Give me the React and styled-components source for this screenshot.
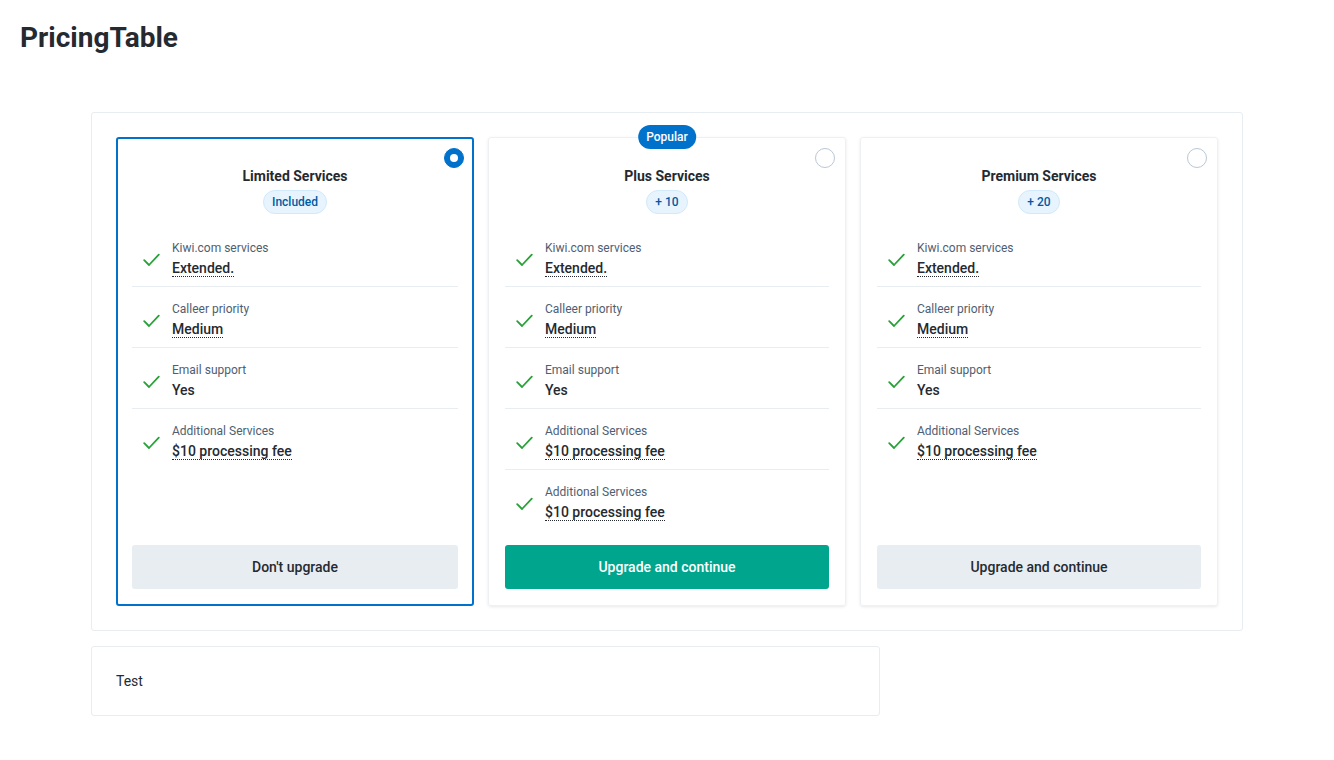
import React, { useState } from 'react';
import styled, { createGlobalStyle } from 'styled-components';

const GlobalStyle = createGlobalStyle`
  body {
    margin: 0;
    background: #ffffff;
    font-family: Roboto, 'Liberation Sans', sans-serif;
    color: #252a31;
  }
  * { box-sizing: border-box; }
`;

const Page = styled.div`
  padding: 22px 20px 20px;
`;

const PageTitle = styled.h1`
  margin: 0;
  font-size: 28px;
  line-height: 32px;
  font-weight: 700;
  color: #252a31;
`;

const Main = styled.div`
  width: 1152px;
  margin: 58px auto 0;
  display: flex;
  flex-direction: column;
  gap: 15px;
`;

const Box = styled.div`
  border: 1px solid #e8edf1;
  border-radius: 3px;
  padding: 24px;
  background: #fff;
  width: ${p => p.$width || 'auto'};
`;

const Grid = styled.div`
  display: grid;
  grid-template-columns: repeat(3, 1fr);
  gap: 14px;
`;

const Card = styled.div`
  position: relative;
  display: flex;
  flex-direction: column;
  padding: ${p => (p.$selected ? '15px 14px' : '16px')};
  border-radius: 3px;
  border: ${p => (p.$selected ? '2px solid #0172cb' : '1px solid #eef1f4')};
  box-shadow: ${p => (p.$selected ? 'none' : '0 1px 3px rgba(37, 42, 49, 0.1)')};
  cursor: pointer;
`;

const PopularBadge = styled.div`
  position: absolute;
  top: -13px;
  left: 50%;
  transform: translateX(-50%);
  background: #0172cb;
  color: #fff;
  font-size: 12px;
  font-weight: 500;
  line-height: 16px;
  padding: 4px 8px;
  border-radius: 12px;
`;

const Radio = styled.span`
  position: absolute;
  top: ${p => (p.$checked ? '9px' : '10px')};
  right: ${p => (p.$checked ? '8px' : '10px')};
  width: 20px;
  height: 20px;
  border-radius: 50%;
  background: ${p => (p.$checked ? '#0172cb' : '#fff')};
  border: 1px solid ${p => (p.$checked ? '#0172cb' : '#bac7d5')};
  display: flex;
  align-items: center;
  justify-content: center;

  &::after {
    content: "";
    display: ${p => (p.$checked ? 'block' : 'none')};
    width: 8px;
    height: 8px;
    border-radius: 50%;
    background: #fff;
  }
`;

const Header = styled.div`
  display: flex;
  flex-direction: column;
  align-items: center;
  padding-top: 12px;
`;

const CardTitle = styled.div`
  font-size: 14px;
  line-height: 20px;
  font-weight: 700;
  color: #252a31;
`;

const Badge = styled.div`
  margin-top: 4px;
  font-size: 12px;
  line-height: 16px;
  font-weight: 500;
  color: #005aa3;
  background: #e8f4fd;
  border: 1px solid #d0e9fb;
  border-radius: 12px;
  padding: 3px 8px;
`;

const List = styled.div`
  margin-top: 12px;
  display: flex;
  flex-direction: column;
`;

const Row = styled.div`
  display: flex;
  align-items: center;
  gap: 12px;
  padding: 14px 0 8px 11px;
  border-bottom: 1px solid #e8edf1;

  &:last-child {
    border-bottom: none;
  }
`;

const CheckIcon = styled.svg`
  flex: none;
  width: 17px;
  height: 14px;
  margin-top: 2px;
`;

const RowText = styled.div`
  display: flex;
  flex-direction: column;
  align-items: flex-start;
  gap: 2px;
`;

const Label = styled.div`
  font-size: 12px;
  line-height: 16px;
  color: #4f5e71;
`;

const Value = styled.span`
  font-size: 14px;
  line-height: 20px;
  font-weight: 500;
  color: #252a31;

  span {
    border-bottom: ${p => (p.$dotted ? '1px dotted #252a31' : 'none')};
  }
`;

const Button = styled.button`
  margin-top: auto;
  height: 44px;
  width: 100%;
  border: none;
  border-radius: 3px;
  font-family: Roboto, 'Liberation Sans', sans-serif;
  font-size: 14px;
  font-weight: 500;
  cursor: pointer;
  background: ${p => (p.$primary ? '#00a58e' : '#e8edf1')};
  color: ${p => (p.$primary ? '#ffffff' : '#252a31')};
`;

const Spacer = styled.div`
  height: 15px;
  flex: none;
`;

const TestText = styled.div`
  font-size: 14px;
  line-height: 20px;
  color: #252a31;
`;

const baseFeatures = [
  { label: 'Kiwi.com services', value: 'Extended.', dotted: true },
  { label: 'Calleer priority', value: 'Medium', dotted: true },
  { label: 'Email support', value: 'Yes', dotted: false },
  { label: 'Additional Services', value: '$10 processing fee', dotted: true },
];

const plans = [
  { id: 'limited', title: 'Limited Services', badge: 'Included', features: baseFeatures, action: "Don't upgrade" },
  {
    id: 'plus',
    title: 'Plus Services',
    badge: '+ 10',
    popular: true,
    features: [...baseFeatures, baseFeatures[3]],
    action: 'Upgrade and continue',
    primary: true,
  },
  { id: 'premium', title: 'Premium Services', badge: '+ 20', features: baseFeatures, action: 'Upgrade and continue' },
];

function Check() {
  return (
    <CheckIcon viewBox="0 0 17 14" fill="none">
      <path d="M1.2 7.2l4.8 4.8L15.8 1.6" stroke="#28a138" strokeWidth="1.8" strokeLinecap="round" strokeLinejoin="round" />
    </CheckIcon>
  );
}

export default function App() {
  const [selected, setSelected] = useState('limited');

  return (
    <Page>
      <GlobalStyle />
      <PageTitle>PricingTable</PageTitle>
      <Main>
        <Box>
          <Grid>
            {plans.map(plan => (
              <Card key={plan.id} $selected={selected === plan.id} onClick={() => setSelected(plan.id)}>
                {plan.popular && <PopularBadge>Popular</PopularBadge>}
                <Radio $checked={selected === plan.id} />
                <Header>
                  <CardTitle>{plan.title}</CardTitle>
                  <Badge>{plan.badge}</Badge>
                </Header>
                <List>
                  {plan.features.map((f, i) => (
                    <Row key={i}>
                      <Check />
                      <RowText>
                        <Label>{f.label}</Label>
                        <Value $dotted={f.dotted}><span>{f.value}</span></Value>
                      </RowText>
                    </Row>
                  ))}
                </List>
                <Spacer />
                <Button $primary={plan.primary}>{plan.action}</Button>
              </Card>
            ))}
          </Grid>
        </Box>
        <Box $width="789px">
          <TestText>Test</TestText>
        </Box>
      </Main>
    </Page>
  );
}
